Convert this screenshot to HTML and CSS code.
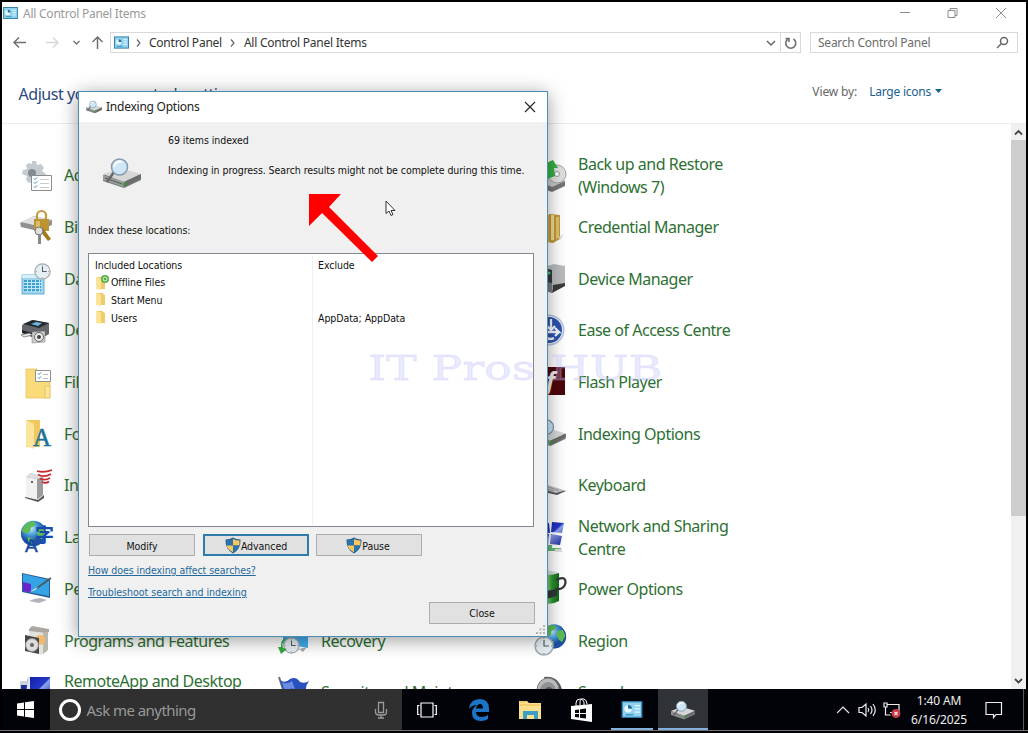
FILE: index.html
```html
<!DOCTYPE html>
<html lang="en">
<head>
  <meta charset="UTF-8" />
  <meta name="viewport" content="width=device-width, initial-scale=1" />
  <title>All Control Panel Items</title>
  <link rel="stylesheet" href="styles.css">
</head>
<body>
  <!-- shared icons -->
  <svg class="defs" width="0" height="0">
    <defs>
      <linearGradient id="blue" x1="0" y1="0" x2="1" y2="1"><stop offset="0" stop-color="#0d189c"/><stop offset=".5" stop-color="#2439c8"/><stop offset=".55" stop-color="#8ea4ee"/><stop offset="1" stop-color="#0e1a9a"/></linearGradient>
      <linearGradient id="green" x1="0" y1="0" x2="1" y2="0"><stop offset="0" stop-color="#1b7d22"/><stop offset=".45" stop-color="#a4e08f"/><stop offset=".7" stop-color="#2c9a31"/><stop offset="1" stop-color="#14681b"/></linearGradient>
      <radialGradient id="globe" cx=".4" cy=".3"><stop offset="0" stop-color="#c5eefb"/><stop offset=".5" stop-color="#4ba0df"/><stop offset="1" stop-color="#1c4f9f"/></radialGradient>
      <symbol id="drive" viewBox="0 0 38 32">
        <path d="M0 18L17 12L38 18V23L21 31L0 24Z" fill="#77797a"/>
        <path d="M0 17L18 11L38 17L21 25Z" fill="#d6d7d7"/>
        <path d="M0 18L21 25V30L0 23Z" fill="#9b9d9d"/>
        <path d="M21 25L38 17V21L21 30Z" fill="#6b6d6d"/>
        <path d="M2 21L19 27" stroke="#555" fill="none"/>
        <path d="M20 26l3-1v3l-3 1z" fill="#2fa52f"/>
        <path d="M11 15L4 25" stroke="#65696e" stroke-width="2.500"/>
        <circle cx="16.500" cy="10" r="8" fill="#cde6f8" stroke="#8599ab" stroke-width="1.500"/>
        <path d="M11 10a6 6 0 0 1 8-5" stroke="#fff" stroke-width="2" fill="none"/>
      </symbol>
      <symbol id="panel" viewBox="0 0 16 13">
        <path d="M0 0H16V13H0Z" fill="#2c7ca5"/><path d="M1 1H15V12H1Z" fill="#8fd3f0"/>
        <circle cx="5" cy="6" r="2.800" fill="#e8f8ff"/><path d="M5 6V3A3 3 0 0 1 8 6Z" fill="#1e6d9c"/>
        <path d="M10 3.500h4M10 6h4M10 8.500h4" stroke="#e8f8ff"/><path d="M3 10.500h6" stroke="#348fbd"/>
      </symbol>
      <symbol id="shield" viewBox="0 0 16 17">
        <path d="M8 0.500Q11 2.500 15.500 2.500Q16 12 8 16.500Q0 12 .5 2.500Q5 2.500 8 .5Z" fill="#255f8e"/>
        <path d="M8 2V8.500H1.700Q1.300 6 1.500 3.500Q5 3.500 8 2Z" fill="#2a75ac"/><path d="M8 2V8.500H14.300Q14.700 6 14.500 3.500Q11 3.500 8 2Z" fill="#f6c85f"/>
        <path d="M8 15.300V8.500H1.700Q2.500 12.500 8 15.300Z" fill="#f6c85f"/><path d="M8 15.300V8.500H14.300Q13.500 12.500 8 15.300Z" fill="#2a75ac"/>
      </symbol>
      <symbol id="folder-sm" viewBox="0 0 12 13">
        <path d="M1 0H8V1L10 2V12H2Z" fill="#f0cb67"/><path d="M1 0L6 1.500V13L1 12Z" fill="#fbe49a"/>
      </symbol>
      <symbol id="dial" viewBox="0 0 20 20">
        <circle cx="10" cy="10" r="9" fill="#e7eef2" stroke="#a2adb4" stroke-width="1.500"/><path d="M10 4V10H15" stroke="#51606b" stroke-width="1.200" fill="none"/><path d="M10 2v1M10 17v1M2 10h1M17 10h1" stroke="#76828a"/>
      </symbol>
      <symbol id="earth" viewBox="0 0 32 32">
        <circle cx="16" cy="16" r="15" fill="url(#globe)"/><path d="M5 7Q10 1 17 2L19 6L13 9L12 14L7 16L2 13ZM20 9L27 8L30 15L26 23L22 20L19 14ZM9 20l7 2-1 6-5-2z" fill="#5fbb55"/>
      </symbol>
    </defs>
  </svg>

  <div class="screen">
    <div class="window">
      <div class="titlebar">
        <svg class="title-icon" width="15" height="12"><use href="#panel"/></svg>
        <span class="title">All Control Panel Items</span>
        <svg class="win-buttons" width="110" height="22" fill="none" stroke="#8c8c8c">
          <path d="M1 10.500H11"/><path d="M49 8.500h7v7h-7zM51 8.500v-2h7v7h-2"/><path d="M97 6L107 16M107 6L97 16"/>
        </svg>
      </div>

      <div class="navbar">
        <svg class="nav-arrows" width="108" height="22" fill="none" stroke-width="1.500">
          <path d="M24 10.500H12M17 5.500L12 10.500L17 15.500" stroke="#707070"/>
          <path d="M44 10.500H56M51 5.500L56 10.500L51 15.500" stroke="#d8d8d8"/>
          <path d="M71.500 9L74.500 12L77.500 9" stroke="#777"/>
          <path d="M95.500 17V5M90.500 10L95.500 5L100.500 10" stroke="#707070"/>
        </svg>
        <div class="address">
          <svg class="address-icon" width="15" height="13"><use href="#panel"/></svg>
          <svg width="6" height="8" fill="none" stroke="#666" stroke-width="1.200"><path d="M1 .5L4 4L1 7.500"/></svg>
          <span class="crumb">Control Panel</span>
          <svg width="6" height="8" fill="none" stroke="#666" stroke-width="1.200"><path d="M1 .5L4 4L1 7.500"/></svg>
          <span class="crumb crumb-last">All Control Panel Items</span>
          <svg class="address-drop" width="10" height="8" fill="none" stroke="#666" stroke-width="1.500"><path d="M1 2L5 6L9 2"/></svg>
        </div>
        <div class="refresh">
          <svg width="14" height="14" fill="none" stroke="#707070" stroke-width="1.600"><path d="M9.500 3A5 5 0 1 1 4 3"/><path d="M1.500 2.500H5V6"/></svg>
        </div>
        <div class="search">
          <span>Search Control Panel</span>
          <svg width="13" height="13" fill="none" stroke="#666" stroke-width="1.500"><circle cx="8" cy="5" r="3.500"/><path d="M5.500 7.500L1 12"/></svg>
        </div>
      </div>

      <div class="header">
        <h1>Adjust your computer's settings</h1>
        <span class="view-by">View by:</span>
        <a class="view-mode">Large icons</a>
        <svg class="view-caret" width="7" height="5"><path d="M0 0H7L3.500 4Z" fill="#17618f"/></svg>
      </div>

      <div class="content">
        <div class="items">
          <div class="item">
            <svg class="icon" viewBox="0 0 32 32"><path d="M12 1h4l1 4 4-1 3 4-2 3 4 3v4l-5 1-3 4-5-1-4 1-3-3 1-4-5-2 1-4 4-1-1-4 3-2 3 1z" fill="#c3cad0"/><circle cx="12" cy="13" r="4" fill="#858c94"/><path d="M11.500 15.500h20v15h-20z" fill="#fff" stroke="#8c8c8c"/><path d="M14 18.500l1 1 2-2M14 22.500l1 1 2-2M14 26.500l1 1 2-2" stroke="#2686c6" fill="none"/><path d="M20 19.500h9M20 23.500h9M20 27.500h9" stroke="#c9cdd0"/></svg>
            <span>Administrative Tools</span>
          </div>
          <div class="item"><span class="icon"></span><span>AutoPlay</span></div>
          <div class="item">
            <svg class="icon" viewBox="0 0 32 32"><path d="M2 20L16 15L31 21V26L18 32L2 26Z" fill="#777"/><path d="M2 20L16 15L31 21L18 27Z" fill="#c9caca"/><circle cx="23" cy="14" r="9" fill="#dfe0e0" stroke="#a89f9a"/><circle cx="23" cy="14" r="2.500" fill="#fff" stroke="#999"/><path d="M11 20Q8 9 13 7L12 3L19 0L24 8L20 8L21 16Z" fill="#36b143"/></svg>
            <span>Back up and Restore (Windows 7)</span>
          </div>

          <div class="item">
            <svg class="icon" viewBox="0 0 32 32"><path d="M0 11L14 4L32 8V13L18 19L1 15Z" fill="#919191"/><path d="M1 10L14 4L31 8L18 14Z" fill="#e1e1e1"/><path d="M17 8V3.500a4.500 4.500 0 0 1 9 0V8" stroke="#c29b3b" stroke-width="2.200" fill="none"/><path d="M14 7h15v12H14z" fill="#bd9431"/><path d="M16 9h4v8h-4z" fill="#dbbd6a"/><path d="M23 16l8 11-3 2-8-10z" fill="#a4771b"/><circle cx="19" cy="19" r="4" fill="#ddd" stroke="#777"/><path d="M18 22h3v10h-3z" fill="#888"/></svg>
            <span>BitLocker&nbsp;Drive&nbsp;Encryption</span>
          </div>
          <div class="item"><span class="icon"></span><span>Colour Management</span></div>
          <div class="item">
            <svg class="icon" viewBox="0 0 32 32"><path d="M3 4L20 2V31L3 29Z" fill="#d9b85b"/><path d="M15 2L26 3V27L19 31L15 30Z" fill="#c09a3e"/><path d="M17 3h3v25h-3z" fill="#f3dc8b"/><path d="M22 5h3v21l-3 1z" fill="#e3c267"/><path d="M25 25l5-3-4 6z" fill="#ddd"/></svg>
            <span>Credential Manager</span>
          </div>

          <div class="item">
            <svg class="icon" viewBox="0 0 32 32"><path d="M2 12H24V31H2Z" fill="#9cd5ed" stroke="#62aed0"/><path d="M2 12H24V15H2Z" fill="#d9f0fa"/><path d="M4 17H21V28H4Z" fill="#3f9fce"/><path d="M4 19.500H22M4 22.500H22M4 25.500H22M7.500 17V29M11.500 17V29M15.500 17V29M19.500 17V29" stroke="#c1e7f6"/><use href="#dial" x="14" y="0" width="17" height="17"/></svg>
            <span>Date and Time</span>
          </div>
          <div class="item"><span class="icon"></span><span>Default Programs</span></div>
          <div class="item">
            <svg class="icon" viewBox="0 0 32 32"><path d="M10 4L20 1L31 3V22L20 25L10 22Z" fill="#b9bbbd"/><path d="M10 5L18 7V25L10 22Z" fill="#34393d"/><path d="M1 17L18 20V30L1 25Z" fill="#777c80"/><path d="M19 22L31 20V23L18 30Z" fill="#3a3b3c"/><circle cx="15" cy="10" r="1.500" fill="#4bc86c"/></svg>
            <span>Device Manager</span>
          </div>

          <div class="item">
            <svg class="icon" viewBox="0 0 32 32"><path d="M2 10L12 5L29 8V19L19 25L2 18Z" fill="#63676c"/><path d="M3 9L13 5L29 8L19 13Z" fill="#25282d"/><path d="M11 9l5-2 6 1-4 3z" fill="#6cb5e0"/><path d="M2 15l14 4v3L2 18z" fill="#22252a"/><path d="M1 20l8-2 4 2-9 2z" fill="#e5e5e5" stroke="#555" stroke-width=".6"/><path d="M12 17l13-1v11l-13 1z" fill="#c9cbcd" stroke="#777" stroke-width=".5"/><circle cx="19" cy="22" r="4.500" fill="#eee" stroke="#666"/><circle cx="19" cy="22" r="2" fill="#444"/></svg>
            <span>Devices and Printers</span>
          </div>
          <div class="item"><span class="icon"></span><span>Display</span></div>
          <div class="item">
            <svg class="icon" viewBox="0 0 32 32"><circle cx="15" cy="15" r="15.500" fill="#b6c4dc"/><circle cx="15" cy="15" r="14" fill="#e9effa"/><circle cx="15" cy="15" r="13" fill="#2c52ae"/><path d="M17 4V14M13 11L17 15L21 11M12 17H25L21 13M25 17L21 21M11 20Q14 26 20 23" stroke="#f5f8ff" stroke-width="2.300" fill="none"/></svg>
            <span>Ease of Access Centre</span>
          </div>

          <div class="item">
            <svg class="icon" viewBox="0 0 32 32"><path d="M6 2H17V4H30V31H6Z" fill="#f9db7a" stroke="#e2bd58" stroke-width=".7"/><path d="M25 19h5v12h-5z" fill="#fbe597" stroke="#dcb754" stroke-width=".6"/><path d="M15.500 3.500h15v11h-15z" fill="#fff" stroke="#8e9295"/><path d="M18 6.500l1 1 2-2M18 10.500l1 1 2-2" stroke="#287ec0" fill="none"/><path d="M23 7.500h5M23 11.500h5" stroke="#bbb"/></svg>
            <span>File Explorer Options</span>
          </div>
          <div class="item"><span class="icon"></span><span>File History</span></div>
          <div class="item">
            <svg class="icon" viewBox="0 0 32 32"><path d="M2 0H31V28H2Z" fill="#4d060b"/><text x="12" y="22" class="glyph-flash">f</text></svg>
            <span>Flash Player</span>
          </div>

          <div class="item">
            <svg class="icon" viewBox="0 0 32 32"><path d="M6 2H20V29H6Z" fill="#efc85e"/><path d="M6 2L14 6V31L6 28Z" fill="#fde69c"/><text x="13" y="28" class="glyph-font">A</text></svg>
            <span>Fonts</span>
          </div>
          <div class="item"><span class="icon"></span><span>HomeGroup</span></div>
          <div class="item"><svg class="icon" viewBox="0 0 32 32"><use href="#drive" x="-3" y="0" width="35" height="29"/></svg><span>Indexing Options</span></div>

          <div class="item">
            <svg class="icon" viewBox="0 0 32 32"><path d="M6 7L11 3L23 7V25L17 30L6 27Z" fill="#9c9c9c"/><path d="M6 7L17 9V30L6 27Z" fill="#f1f1f1"/><path d="M6 7L11 3L23 7L17 9Z" fill="#dedede"/><circle cx="12" cy="12" r="1" fill="#333"/><path d="M5 27l13 3 6-5v3l-6 4-13-4z" fill="#555"/><path d="M17 1Q24 3 32 0M18 4.500Q24 8 31 4M20 8.500Q25 11 30 8M22 12Q26 14 29 11.500" stroke="#c92a2f" stroke-width="1.800" fill="none"/></svg>
            <span>Infrared</span>
          </div>
          <div class="item"><span class="icon"></span><span>Internet Options</span></div>
          <div class="item">
            <svg class="icon" viewBox="0 0 32 32"><path d="M1 12L32 21L23 25L1 20Z" fill="#57595a"/><path d="M1 11L31 20.500L22 23L1 17Z" fill="#c5c6c7"/><path d="M3 13.500L25 20.500M2 16L20 21" stroke="#999"/></svg>
            <span>Keyboard</span>
          </div>

          <div class="item">
            <svg class="icon" viewBox="0 0 32 32"><use href="#earth" x="0" y="-2" width="27" height="27"/><text x="5" y="30" class="glyph-lang">A</text><text x="15" y="20" class="glyph-cjk">字</text></svg>
            <span>Language</span>
          </div>
          <div class="item"><span class="icon"></span><span>Mouse</span></div>
          <div class="item">
            <svg class="icon" viewBox="0 0 32 32"><path d="M18 0L30 1L28 11L17 10ZM4 2L15 1L16 11L5 10ZM17 12L28 14L26 23L16 22ZM5 12L15 12L14 23L6 22Z" fill="url(#blue)"/><path d="M12 23h6v3h9v3H5v-3h7z" fill="#62bd76"/><path d="M21 27h7v3h-7z" fill="#ddd"/></svg>
            <span>Network and Sharing Centre</span>
          </div>

          <div class="item">
            <svg class="icon" viewBox="0 0 32 32"><path d="M2 0L30 6V25L2 19Z" fill="#2a5f95"/><path d="M3 1L29 7V23L3 18Z" fill="#35a4e7"/><path d="M3 9L11 11V19.500L3 18Z" fill="#6a25cc"/><path d="M14 26L20 25L27 27L19 30L9 28Z" fill="#b0b4b8"/><path d="M31 5L17 15" stroke="#4f555a" stroke-width="1.600"/><path d="M18 14L9 19L15 17Z" fill="#f0f0f0"/></svg>
            <span>Personalization</span>
          </div>
          <div class="item"><span class="icon"></span><span>Phone and Modem</span></div>
          <div class="item">
            <svg class="icon" viewBox="0 0 32 32"><path d="M2 0H25V28Q14 34 2 28Z" fill="url(#green)"/><path d="M2 0Q14-5 25 0Q14 4 2 0" fill="#d9dddf"/><path d="M22 7Q32 2 31.500 10Q30 17 22 16V22L12 25" stroke="#33373b" stroke-width="2.200" fill="none"/><path d="M12 18L23 16V22L12 26Z" fill="#33373b"/></svg>
            <span>Power Options</span>
          </div>

          <div class="item">
            <svg class="icon" viewBox="0 0 32 32"><path d="M9 4L27 6V26L21 30L9 24Z" fill="#e4e2dc"/><path d="M9 4L12 1L29 4V7L27 8L9 6Z" fill="#aaa89f"/><path d="M23 7h5v18l-5 4z" fill="#bab7ad"/><circle cx="20" cy="15" r="5" fill="#f4b86b"/><path d="M5 10L19 13V29L5 26Z" fill="#44474a"/><circle cx="12" cy="20" r="6.500" fill="#ddd" stroke="#888"/><circle cx="12" cy="20" r="2" fill="#666"/></svg>
            <span>Programs and Features</span>
          </div>
          <div class="item">
            <svg class="icon" viewBox="0 0 32 32"><path d="M6 6L31 6V23L20 21L6 19Z" fill="#42aef0"/><path d="M22 24l8-2-4 5z" fill="#aaa"/><use href="#dial" x="6" y="12" width="17" height="17"/><path d="M10 13Q4 17 6 23L10 24L4 29L1 22L4 22Q3 14 10 13Z" fill="#36a83c"/></svg>
            <span>Recovery</span>
          </div>
          <div class="item"><svg class="icon" viewBox="0 0 32 32"><use href="#earth" x="7" y="-2" width="26" height="27"/><use href="#dial" x="0" y="11" width="20" height="20"/></svg><span>Region</span></div>

          <div class="item">
            <svg class="icon" viewBox="0 0 32 32"><path d="M0 4h7v20H0z" fill="#d0d4da"/><path d="M1 8h6v7H1z" fill="#1c2b98"/><path d="M8 0H30V25H5Z" fill="url(#blue)"/><path d="M8 0h2v25H5z" fill="#dfe6f8"/></svg>
            <span>RemoteApp and Desktop Connections</span>
          </div>
          <div class="item">
            <svg class="icon" viewBox="0 0 32 32"><path d="M2 0L12 31" stroke="#6b7077" stroke-width="2"/><path d="M3 3Q8 7 13 2Q19-1 23 5Q28 7 32 4Q27 10 30 19Q23 21 19 16Q14 14 8 18Z" fill="#2951bd"/><path d="M5 5Q10 8 15 4L18 12Q12 10 8 15Z" fill="#6c8ce2"/></svg>
            <span>Security and Maintenance</span>
          </div>
          <div class="item">
            <svg class="icon" viewBox="0 0 32 32"><path d="M10 0Q26-2 29 17L16 30Z" fill="#55585a"/><ellipse cx="14" cy="13" rx="11" ry="12" fill="#b9bbbc" stroke="#777"/><ellipse cx="14" cy="14" rx="8" ry="9" fill="#8f9192"/><ellipse cx="15" cy="16" rx="5" ry="6" fill="#555"/></svg>
            <span>Sound</span>
          </div>
        </div>

        <div class="scrollbar">
          <svg width="15" height="16" fill="none" stroke="#444" stroke-width="1.800"><path d="M4 10.500L7.500 7L11 10.500"/></svg>
          <div class="thumb"></div>
          <svg class="scroll-down" width="15" height="16" fill="none" stroke="#444" stroke-width="1.800"><path d="M4 6L7.500 9.500L11 6"/></svg>
        </div>
      </div>
    </div>

    <div class="taskbar">
      <div class="start"><svg width="17" height="17" fill="#fff"><path d="M0 2.500L7 1.500V8H0ZM8 1.300L17 0V8H8ZM0 9H7V15.500L0 14.500ZM8 9H17V17L8 15.700Z"/></svg></div>
      <div class="cortana">
        <svg width="24" height="24" fill="none" stroke="#fff" stroke-width="3"><circle cx="12" cy="12" r="9.500"/></svg>
        <span>Ask me anything</span>
        <svg class="mic" width="14" height="18" fill="none" stroke="#9a9a9a" stroke-width="1.300"><path d="M4.500 1.500h5v10h-5z"/><path d="M1.500 8v3q0 3 3 3h5q3 0 3-3V8M7 14v3M4 17h6"/></svg>
      </div>
      <div class="task"><svg width="20" height="16" fill="none" stroke="#fff" stroke-width="1.200"><path d="M4 1h12v14H4zM2.500 3.500H.7v9h1.800M17.500 3.500h1.800v9h-1.800"/></svg></div>
      <div class="task"><svg width="22" height="22" viewBox="0 0 22 22"><path d="M1 10Q2 0 12 0Q21 0 21 10V13H8Q8 18 14 18Q17 18 20 16V20Q17 22 13 22Q4 22 4 14Q4 9 9 6Q4 6 1 10ZM8 9.500H15Q15 5 12 5Q9 5 8 9.500Z" fill="#1b74c6" fill-rule="evenodd"/></svg></div>
      <div class="task"><svg width="23" height="20"><path d="M0 1H8L10 3H22V19H0Z" fill="#f9e08f"/><path d="M1 2h6M1 5H21" stroke="#eab94f"/><path d="M4 19V11H19V19H15V15H8V19Z" fill="#3e9fc6"/></svg></div>
      <div class="task"><svg width="22" height="24"><path d="M5 8V5Q5 1 9 1Q12 1 13 4V7M9 7V4Q9 0 13 1Q16 2 16 6" stroke="#fff" fill="none"/><path d="M0 8L21 6V24L0 21Z" fill="#fff"/><path d="M4 12L8 11.500V15H4ZM9 11.300L15 10.500V15H9ZM4 16H8V19.500L4 19ZM9 16H15V20.500L9 19.700Z" fill="#05060a"/></svg></div>
      <div class="task open"><svg width="22" height="17"><use href="#panel"/></svg></div>
      <div class="task open active"><svg width="24" height="20"><use href="#drive"/></svg></div>
      <div class="tray">
        <svg width="66" height="20" fill="none" stroke="#eee" stroke-width="1.200">
          <path d="M0 13L6 7L12 13"/>
          <path d="M22 7.500h3l4-3.500v12l-4-3.500h-3zM31 8q1.500 2 0 4M33.500 6q3 4 0 8M36 4q4.500 6 0 12"/>
          <path d="M50 4.500h12v8h-9M47 3h3v4h-3zM48.500 7v8h5"/><circle cx="59" cy="13.500" r="4.500" fill="#c73a42" stroke="none"/><path d="M57.500 12l3 3M60.500 12l-3 3"/>
        </svg>
        <div class="clock"><div>1:40 AM</div><div>6/16/2025</div></div>
        <svg class="action" width="18" height="18" fill="none" stroke="#eee" stroke-width="1.200"><path d="M1 1.500H16.500V13.500H11L8.500 16.500V13.500H1Z"/></svg>
      </div>
    </div>
  </div>

  <div class="dialog">
    <div class="dialog-title">
      <svg width="16" height="14"><use href="#drive"/></svg>
      <span>Indexing Options</span>
      <svg class="dialog-close" width="12" height="12" stroke="#222" stroke-width="1.100"><path d="M1 1L11 11M11 1L1 11"/></svg>
    </div>
    <div class="dialog-body">
      <div class="status">
        <svg width="38" height="32"><use href="#drive"/></svg>
        <div class="status-text">
          <p>69 items indexed</p>
          <p>Indexing in progress. Search results might not be complete during this time.</p>
        </div>
      </div>
      <p class="label">Index these locations:</p>
      <div class="locations">
        <div class="included">
          <div class="row">Included Locations</div>
          <div class="row"><svg width="15" height="15" viewBox="0 0 15 15"><use href="#folder-sm" x="0" y="2" width="12" height="13"/><circle cx="10" cy="4" r="4" fill="#52ad40"/><circle cx="10" cy="4" r="2" fill="none" stroke="#dff3d9"/></svg>Offline Files</div>
          <div class="row"><svg width="15" height="13" viewBox="0 0 15 13"><use href="#folder-sm" width="12" height="13"/></svg>Start Menu</div>
          <div class="row"><svg width="15" height="13" viewBox="0 0 15 13"><use href="#folder-sm" width="12" height="13"/></svg>Users</div>
        </div>
        <div class="excluded">
          <div class="row">Exclude</div>
          <div class="row"></div>
          <div class="row"></div>
          <div class="row">AppData; AppData</div>
        </div>
      </div>
      <div class="buttons">
        <button>Modify</button>
        <button class="focused"><svg width="16" height="17"><use href="#shield"/></svg>Advanced</button>
        <button class="pause"><svg width="16" height="17"><use href="#shield"/></svg>Pause</button>
      </div>
      <a class="link link-how">How does indexing affect searches?</a>
      <a class="link link-trouble">Troubleshoot search and indexing</a>
      <button class="close">Close</button>
      <svg class="grip" width="10" height="10" fill="#b5b5b5"><path d="M7 0h2v2H7zM7 3.500h2v2H7zM7 7h2v2H7zM3.500 3.500h2v2h-2zM3.500 7h2v2h-2zM0 7h2v2H0z"/></svg>
    </div>
  </div>

  <div class="watermark">IT Pros HUB</div>
  <svg class="arrow" width="70" height="70"><path d="M0 0H32L20 13L69 62L63 68L13 19L0 32Z" fill="#fe0000"/></svg>
  <svg class="cursor" width="12" height="18"><path d="M1 1V13.500L4 11L6 15.500L8 14.500L6 10.500H10Z" fill="#fff" stroke="#333"/></svg>
</body>
</html>
```
FILE: styles.css
```css
* {
  box-sizing: border-box;
}
body {
  margin: 0;
  width: 1028px;
  height: 733px;
  overflow: hidden;
  position: relative;
  background: #000;
  font-family: "Noto Sans", "Open Sans", sans-serif;
  font-size: 12px;
  letter-spacing: -0.24px;
}
svg {
  display: block;
  flex: none;
}
p, h1 {
  margin: 0;
  font-weight: normal;
}
.defs {
  position: absolute;
}
.screen {
  height: 731px;
  padding: 2px 2px 0;
  border-bottom: 1px solid #737373;
  display: flex;
  flex-direction: column;
}

/* Control panel window */
.window {
  height: 687px;
  background: #fff;
  display: flex;
  flex-direction: column;
  overflow: hidden;
}
.titlebar {
  height: 22px;
  display: flex;
  align-items: center;
  color: #999;
}
.title-icon {
  margin: 0 5px 0 1px;
}
.win-buttons {
  margin-left: auto;
  margin-right: 17px;
}
.navbar {
  height: 35px;
  padding-top: 8px;
  display: flex;
  align-items: flex-start;
}
.address {
  height: 21px;
  width: 671px;
  border: 1px solid #d9d9d9;
  display: flex;
  align-items: center;
  padding-left: 3px;
  color: #333;
}
.address-icon {
  margin-right: 7px;
}
.crumb {
  margin: 0 8px 0 7px;
}
.crumb-last {
  margin-left: 8px;
}
.address-drop {
  margin-left: auto;
  margin-right: 4px;
}
.refresh {
  width: 20px;
  height: 21px;
  border: 1px solid #d9d9d9;
  border-left: none;
  padding: 3px 3px;
}
.search {
  margin-left: 9px;
  width: 208px;
  height: 21px;
  border: 1px solid #d9d9d9;
  display: flex;
  align-items: center;
  justify-content: space-between;
  padding: 0 8px 0 7px;
  color: #6d6d6d;
}
.header {
  height: 65px;
  flex: none;
  border-bottom: 1px solid #e9edf0;
  display: flex;
  align-items: center;
  padding: 1px 84px 0 16.5px;
}
.header h1 {
  font-size: 16px;
  letter-spacing: -0.45px;
  color: #2a4780;
  padding-top: 4px;
  margin-right: auto;
}
.view-by {
  color: #666;
  margin-right: 12px;
  letter-spacing: -0.12px;
}
.view-mode {
  color: #17618f;
  margin-right: 4px;
}
.content {
  flex: 1;
  min-height: 0;
  display: flex;
}
.items {
  flex: 1;
  margin-top: 26px;
  padding-left: 18px;
  display: grid;
  grid-template-columns: repeat(3, 257px);
  grid-auto-rows: 51.7px;
}
.item {
  display: flex;
  align-items: center;
  font-size: 16px;
  line-height: 23px;
  letter-spacing: -0.48px;
  color: #2d7032;
}
.item span:last-child {
  width: 185px;
}
.icon {
  width: 32px;
  height: 32px;
  margin-right: 12px;
  flex: none;
  overflow: visible;
}
.glyph-flash {
  font: italic bold 24px "Noto Sans", sans-serif;
  fill: #f3eeee;
}
.glyph-font {
  font: 25px "Liberation Serif", serif;
  fill: #1c7198;
  stroke: #1c7198;
  stroke-width: 0.5px;
}
.glyph-lang {
  font: 19px "Liberation Sans", sans-serif;
  fill: #1548a0;
  stroke: #1548a0;
  stroke-width: 0.5px;
}
.glyph-cjk {
  font: bold 19px "Noto Sans CJK SC", sans-serif;
  letter-spacing: 0;
  fill: #154ab0;
}
.scrollbar {
  width: 15px;
  background: #f0f0f0;
  display: flex;
  flex-direction: column;
}
.thumb {
  height: 376px;
  background: #cdcdcd;
}
.scroll-down {
  margin-top: auto;
}

/* Taskbar */
.taskbar {
  height: 41px;
  background: #020308;
  display: flex;
  align-items: stretch;
}
.start {
  width: 48px;
  display: flex;
  align-items: center;
  padding-left: 15px;
}
.cortana {
  width: 352px;
  background: #303030;
  display: flex;
  align-items: center;
  padding: 0 14px 0 8px;
  color: #989898;
  font-size: 15px;
}
.cortana span {
  margin-left: 4.5px;
  letter-spacing: -0.55px;
}
.mic {
  margin-left: auto;
}
.task {
  width: 50px;
  margin-right: 1.6px;
  display: flex;
  align-items: center;
  justify-content: center;
}
.task.open {
  width: 42px;
  margin: 0 5px 0 3px;
  padding-top: 2px;
  border-bottom: 2px solid #82afdc;
}
.task.active {
  width: 50px;
  margin: 0;
  background: #2f3236;
}
.tray {
  margin-left: auto;
  display: flex;
  align-items: center;
  color: #eee;
  padding-right: 20px;
  margin-right: 2px;
  border-right: 1px solid #55585c;
}
.clock {
  margin-left: 8px;
  text-align: center;
  line-height: 19px;
  letter-spacing: -0.12px;
}
.action {
  margin-left: 18px;
}

/* Indexing Options dialog */
.dialog {
  position: absolute;
  left: 78px;
  top: 91px;
  width: 470px;
  height: 546px;
  border: 1px solid #4c8db2;
  background: #f0f0f0;
  box-shadow: 0 3px 18px rgba(0, 0, 0, 0.4);
  display: flex;
  flex-direction: column;
}
.dialog-title {
  height: 30px;
  background: #fff;
  display: flex;
  align-items: center;
  padding: 0 11px 1px 7px;
  color: #222;
}
.dialog-title span {
  margin-left: 4px;
}
.dialog-close {
  margin-left: auto;
}
.dialog-body, .dialog-body button {
  font-family: "DejaVu Sans Condensed", "DejaVu Sans", sans-serif;
  font-size: 10.5px;
  letter-spacing: -0.06px;
  color: #111;
}
.dialog-body {
  flex: 1;
  display: flex;
  flex-direction: column;
  padding: 0 13px 0 9px;
}
.status {
  display: flex;
  height: 100px;
  padding: 35px 0 0 15px;
}
.status-text {
  margin: -24px 0 0 27px;
  white-space: nowrap;
}
.status-text p {
  line-height: 14px;
  margin-bottom: 16px;
}
.label {
  line-height: 16px;
}
.locations {
  height: 274px;
  margin-top: 15px;
  border: 1px solid #828790;
  background: #fff;
  display: flex;
  padding-top: 2px;
}
.included {
  width: 224px;
  border-right: 1px solid #f0f0f0;
  padding-left: 6px;
}
.excluded {
  padding-left: 5px;
}
.row {
  height: 17.6px;
  display: flex;
  align-items: center;
}
.row svg {
  margin-right: 1px;
}
.buttons {
  display: flex;
  gap: 8px;
  margin-top: 7px;
  padding-left: 1px;
}
.dialog-body button {
  width: 106px;
  height: 22px;
  padding: 1px 0 0;
  border: 1px solid #adadad;
  background: #e1e1e1;
  display: flex;
  align-items: center;
  justify-content: center;
  flex: none;
}
.dialog-body .focused {
  border: 2px solid #2c7cac;
}
.dialog-body .pause {
  margin-left: -1px;
  padding-right: 2px;
}
.link {
  color: #24699c;
  text-decoration: underline;
  line-height: 14px;
  align-self: flex-start;
}
.link-how {
  margin-top: 7px;
}
.link-trouble {
  margin-top: 8px;
  letter-spacing: 0;
}
.dialog-body .close {
  align-self: flex-end;
  margin: 3px -1px 0 0;
  padding-top: 0;
}
.grip {
  align-self: flex-end;
  margin: 1px -12px 0 0;
}

/* Marks drawn over the desktop */
.watermark {
  position: absolute;
  left: 368px;
  top: 350px;
  font-family: "DejaVu Serif", serif;
  font-size: 33px;
  line-height: 38px;
  letter-spacing: 0;
  white-space: nowrap;
  color: rgba(190, 190, 250, 0.32);
  -webkit-text-stroke: 0.8px rgba(190, 190, 250, 0.3);
  transform: scaleX(1.39);
  transform-origin: left;
}
.arrow {
  position: absolute;
  left: 309px;
  top: 194px;
}
.cursor {
  position: absolute;
  left: 385px;
  top: 200px;
}
```
